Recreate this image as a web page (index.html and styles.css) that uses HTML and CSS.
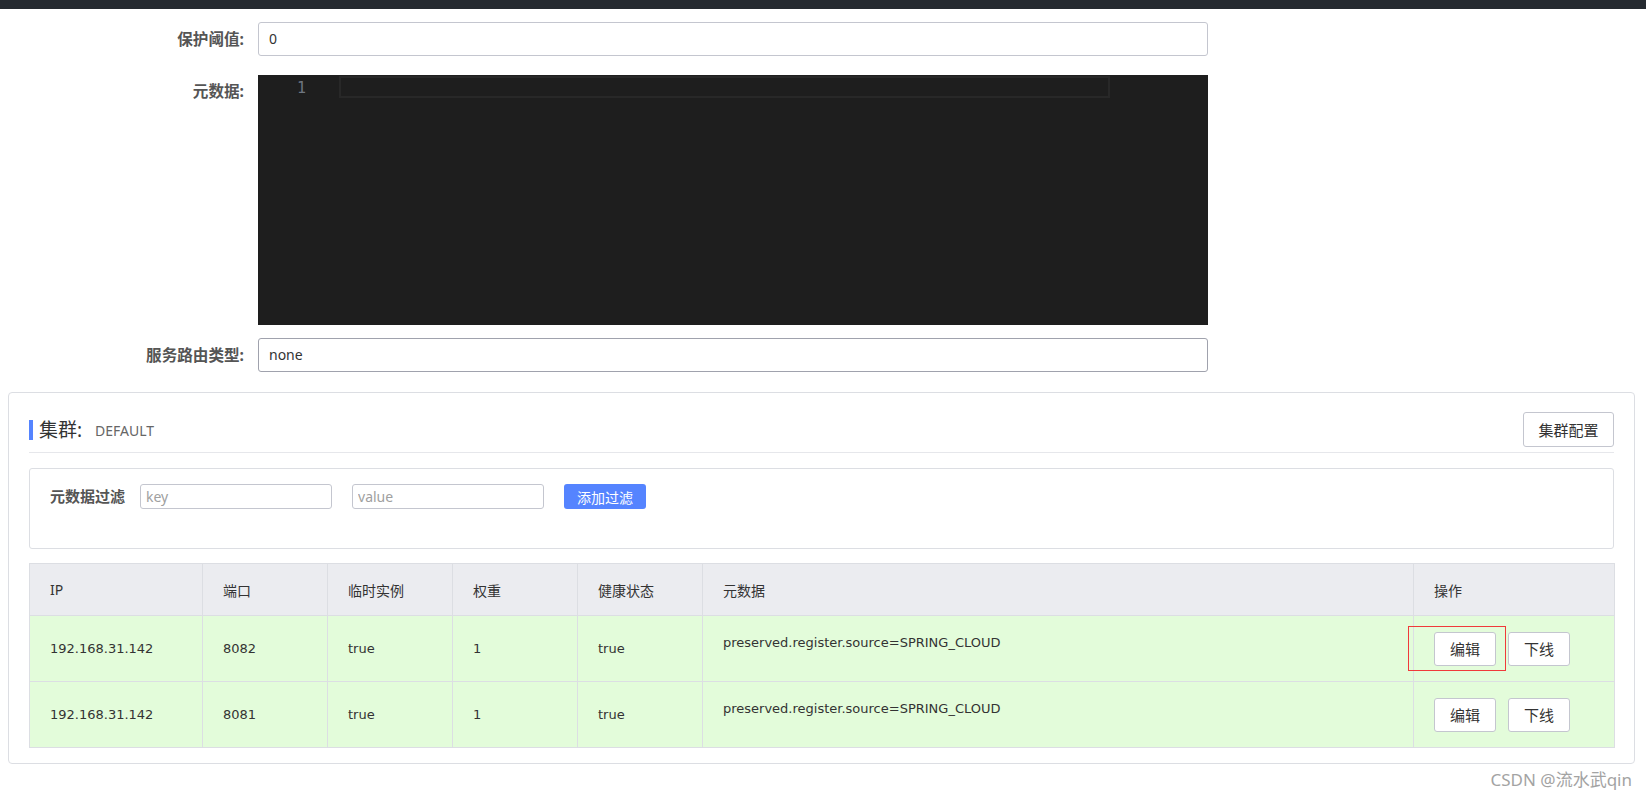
FILE: index.html
```html
<!DOCTYPE html>
<html lang="zh-CN">
<head>
<meta charset="utf-8">
<title>服务详情</title>
<link rel="stylesheet" href="styles.css">
</head>
<body>
<div class="topbar"></div>

<div class="form">
  <div class="form-row row-1">
    <label class="form-label">保护阈值:</label>
    <div class="input">0</div>
  </div>
  <div class="form-row row-2">
    <label class="form-label label-top">元数据:</label>
    <div class="editor">
      <div class="gutter"><span class="line-no">1</span></div>
      <div class="code"><div class="current-line"></div></div>
    </div>
  </div>
  <div class="form-row row-3">
    <label class="form-label">服务路由类型:</label>
    <div class="input input-hover">none</div>
  </div>
</div>

<div class="card">
  <div class="card-head">
    <div class="title">
      <span class="title-bar"></span>
      <span class="title-main">集群:</span>
      <span class="title-sub">DEFAULT</span>
    </div>
    <button class="btn btn-cluster">集群配置</button>
  </div>

  <div class="filter">
    <span class="filter-label">元数据过滤</span>
    <input class="filter-input" placeholder="key">
    <input class="filter-input" placeholder="value">
    <button class="btn-primary">添加过滤</button>
  </div>

  <table class="grid">
    <colgroup>
      <col class="c-ip"><col class="c-port"><col class="c-eph"><col class="c-weight"><col class="c-health"><col class="c-meta"><col class="c-op">
    </colgroup>
    <thead>
      <tr><th>IP</th><th>端口</th><th>临时实例</th><th>权重</th><th>健康状态</th><th>元数据</th><th>操作</th></tr>
    </thead>
    <tbody>
      <tr>
        <td>192.168.31.142</td><td>8082</td><td>true</td><td>1</td><td>true</td>
        <td class="meta">preserved.register.source=SPRING_CLOUD</td>
        <td class="ops"><span class="marked"><button class="btn btn-op">编辑</button><span class="mark"></span></span><button class="btn btn-op">下线</button></td>
      </tr>
      <tr>
        <td>192.168.31.142</td><td>8081</td><td>true</td><td>1</td><td>true</td>
        <td class="meta">preserved.register.source=SPRING_CLOUD</td>
        <td class="ops"><button class="btn btn-op">编辑</button><button class="btn btn-op">下线</button></td>
      </tr>
    </tbody>
  </table>
</div>

<div class="watermark">CSDN @流水武qin</div>
</body>
</html>
```

FILE: styles.css
```css
* { box-sizing: border-box; }

html, body {
  margin: 0;
  padding: 0;
  background: #ffffff;
}

body {
  font-family: "Noto Sans", "Noto Sans CJK SC", sans-serif;
  font-size: 14px;
  color: #333333;
  position: relative;
  height: 795px;
  overflow: hidden;
}

.topbar {
  height: 9px;
  background: #252a30;
}

/* ---------- form ---------- */
.form {
  display: flex;
  flex-direction: column;
}

.form-row {
  display: grid;
  grid-template-columns: 244px 950px;
  column-gap: 14px;
  align-items: center;
}

.row-1 { margin-top: 13px; }
.row-2 { margin-top: 19px; align-items: start; }
.row-3 { margin-top: 13px; }

.form-label {
  text-align: right;
  font-size: 15.6px;
  font-weight: bold;
  color: #555555;
  line-height: 20px;
}

.label-top { padding-top: 6px; }

.input {
  height: 34px;
  border: 1px solid #c4c6cf;
  border-radius: 3px;
  padding: 0 10px;
  line-height: 32px;
  font-size: 14px;
  color: #333333;
  background: #fff;
}

.input-hover { border-color: #a0a2ad; }

.editor {
  height: 250px;
  width: 950px;
  background: #1e1e1e;
  display: flex;
}

.gutter {
  width: 81px;
  flex: none;
  text-align: right;
  padding-right: 33px;
  padding-top: 3px;
}

.line-no {
  font-family: "DejaVu Sans Mono", monospace;
  font-size: 15px;
  line-height: 20px;
  color: #6e7681;
}

.code { flex: 1; padding-top: 1px; }

.current-line {
  width: 771px;
  height: 22px;
  border: 2px solid #282828;
}

/* ---------- card ---------- */
.card {
  margin: 20px 11px 0 8px;
  border: 1px solid #dcdee3;
  border-radius: 4px;
  padding: 19px 20px 15px 20px;
}

.card-head {
  display: flex;
  justify-content: space-between;
  align-items: center;
  padding-bottom: 5px;
  border-bottom: 1px solid #e6e7eb;
}

.title {
  display: flex;
  align-items: center;
}

.title-bar {
  width: 4px;
  height: 20px;
  background: #5584ff;
  margin-right: 6px;
}

.title-main {
  font-size: 19px;
  color: #333333;
  line-height: 24px;
}

.title-sub {
  font-size: 14px;
  color: #666666;
  margin-left: 13px;
  margin-top: 2px;
}

.btn {
  font-family: "Noto Sans", "Noto Sans CJK SC", sans-serif;
  background: #ffffff;
  border: 1px solid #c4c6cf;
  border-radius: 3px;
  color: #333333;
  font-size: 15px;
  padding: 0;
  cursor: pointer;
}

.btn-cluster {
  width: 91px;
  height: 35px;
}

.filter {
  margin-top: 15px;
  height: 81px;
  border: 1px solid #dcdee3;
  border-radius: 3px;
  padding: 15px 20px 0 20px;
  display: flex;
  align-items: flex-start;
}

.filter-label {
  font-size: 15px;
  font-weight: bold;
  color: #555555;
  line-height: 25px;
  margin-right: 15px;
}

.filter-input {
  width: 192px;
  height: 25px;
  border: 1px solid #c4c6cf;
  border-radius: 3px;
  padding: 0 5px;
  font-family: "Noto Sans", sans-serif;
  font-size: 14px;
  color: #333;
  margin-right: 20px;
  outline: none;
}

.filter-input::placeholder { color: #a0a0a0; }

.btn-primary {
  width: 82px;
  height: 25px;
  background: #5584ff;
  border: none;
  border-radius: 3px;
  color: #ffffff;
  font-family: "Noto Sans", "Noto Sans CJK SC", sans-serif;
  font-size: 14px;
  padding: 0;
}

/* ---------- table ---------- */
.grid {
  margin-top: 14px;
  width: 100%;
  border-collapse: collapse;
  table-layout: fixed;
  border: 1px solid #dcdee3;
}

.c-ip { width: 173px; }
.c-port { width: 125px; }
.c-eph { width: 125px; }
.c-weight { width: 125px; }
.c-health { width: 125px; }
.c-meta { width: 711px; }
.c-op { width: 201px; }

.grid th, .grid td {
  border: 1px solid #dcdee3;
  padding: 0 20px;
  text-align: left;
  color: #333333;
}

.grid th {
  height: 52px;
  background: #ebecf0;
  font-weight: normal;
  font-size: 14px;
}

.grid td {
  height: 66px;
  background: #e3fcda;
  font-family: "DejaVu Sans", "Noto Sans CJK SC", sans-serif;
  font-size: 13px;
}

.grid td.meta {
  vertical-align: top;
  padding-top: 17px;
  line-height: 20px;
}

.ops { white-space: nowrap; }

.btn-op {
  width: 62px;
  height: 34px;
  margin-right: 12px;
  vertical-align: middle;
}

.marked {
  position: relative;
  display: inline-block;
  vertical-align: middle;
}

.marked .btn-op { display: block; }

.mark {
  position: absolute;
  left: -26px;
  top: -6px;
  width: 98px;
  height: 45px;
  border: 1px solid #f03a3a;
  pointer-events: none;
}

/* ---------- watermark ---------- */
.watermark {
  position: absolute;
  right: 14px;
  top: 766px;
  font-size: 17px;
  color: #a3a3a3;
  text-shadow: 0 0 1px #ffffff;
}
```
